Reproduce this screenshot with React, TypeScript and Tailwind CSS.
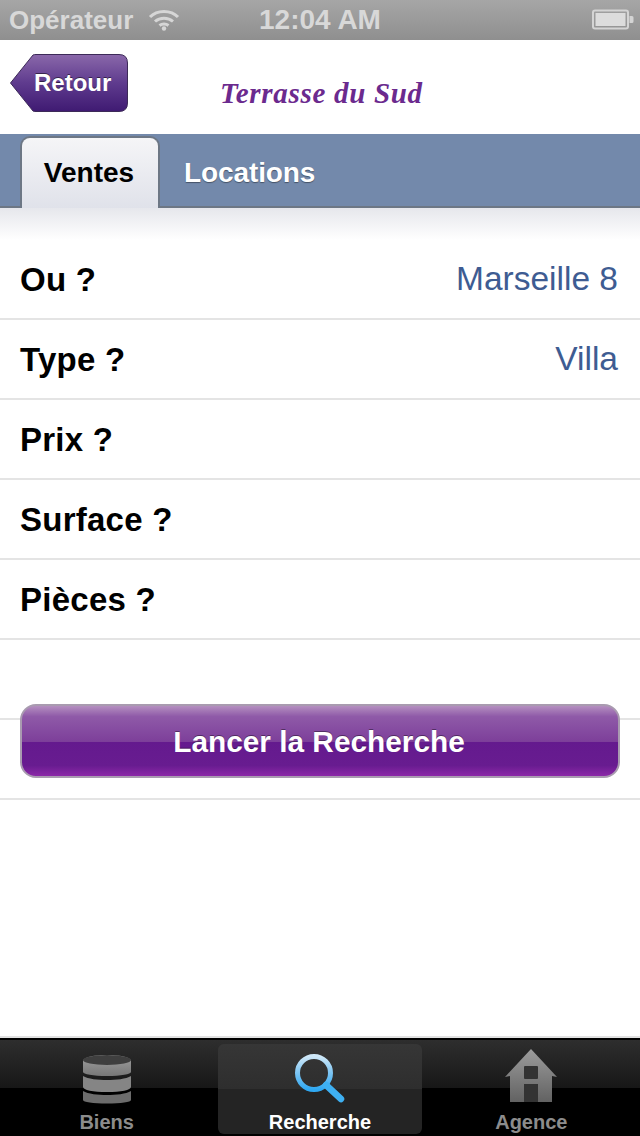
const rows = [
  { label: "Ou ?", value: "Marseille 8" },
  { label: "Type ?", value: "Villa" },
  { label: "Prix ?" },
  { label: "Surface ?" },
  { label: "Pièces ?" },
];

function Wifi() {
  return (
    <svg width="32" height="22" viewBox="0 0 32 22" fill="none" stroke="#d6d6d6" strokeWidth="3">
      <path d="M2 8 C9 0.5 23 0.5 30 8" />
      <path d="M7 12.5 C12 8 20 8 25 12.5" />
      <path d="M11.5 16.5 C14 14.5 18 14.5 20.5 16.5" />
      <circle cx="16" cy="19.5" r="2.2" fill="#d6d6d6" stroke="none" />
    </svg>
  );
}

function Battery() {
  return (
    <svg width="42" height="22" viewBox="0 0 42 22">
      <rect x="1" y="1.5" width="35" height="18" rx="2" fill="none" stroke="#d4d4d4" strokeWidth="2" />
      <rect x="3.500" y="4" width="30" height="13" fill="#dcdcdc" />
      <path d="M37.500 7h2.500a1.500 1.500 0 0 1 1.500 1.500v4a1.500 1.500 0 0 1-1.500 1.500h-2.500z" fill="#d4d4d4" />
    </svg>
  );
}

function RetourButton() {
  return (
    <div className="relative h-[58px] w-[118px]">
      <svg className="absolute inset-0" width="118" height="58" viewBox="0 0 118 58">
        <defs>
          <linearGradient id="retour" x1="0" y1="0" x2="0" y2="1">
            <stop offset="0" stopColor="#8a68aa" />
            <stop offset="0.5" stopColor="#5f3b8e" />
            <stop offset="1" stopColor="#3f1a72" />
          </linearGradient>
        </defs>
        <path
          d="M0.5 29 L23 1 Q24 0.5 26 0.5 H109 Q117.5 0.5 117.5 9 V49 Q117.5 57.5 109 57.5 H26 Q24 57.5 23 57 Z"
          fill="url(#retour)"
          stroke="#3d2a58"
          strokeWidth="1"
        />
      </svg>
      <span className="absolute left-[24px] top-[13px] text-[24px] leading-[32px] font-bold text-white [text-shadow:0_-1px_0_rgba(0,0,0,0.5)]">
        Retour
      </span>
    </div>
  );
}

function Biens() {
  return (
    <svg width="50" height="50" viewBox="0 0 50 50">
      <defs>
        <linearGradient id="biens" x1="0" y1="0" x2="0" y2="1">
          <stop offset="0" stopColor="#a0a0a0" />
          <stop offset="1" stopColor="#777" />
        </linearGradient>
      </defs>
      <path d="M1 7C1 3 13 1 25 1s24 2 24 6v11c0 2-10 4-24 4S1 20 1 18z" fill="url(#biens)" />
      <ellipse cx="25" cy="6" rx="24" ry="5" fill="#3f3f3f" />
      <path d="M1 22c5 3 15 4 24 4s19-1 24-4v11c0 3-10 5-24 5S1 36 1 33z" fill="#858585" />
      <path d="M1 37c5 3 15 4 24 4s19-1 24-4v9c0 2-10 3.500-24 3.500S1 48 1 46z" fill="#6c6c6c" />
    </svg>
  );
}

function Loupe() {
  return (
    <svg width="52" height="50" viewBox="0 0 52 50" fill="none">
      <defs>
        <linearGradient id="loupe" x1="0" y1="0" x2="0" y2="1">
          <stop offset="0" stopColor="#cfe8f8" />
          <stop offset="0.5" stopColor="#7cc4f2" />
          <stop offset="1" stopColor="#2fa8f2" />
        </linearGradient>
      </defs>
      <circle cx="20" cy="20" r="16.500" stroke="url(#loupe)" strokeWidth="5" />
      <path d="M32 32 L47 46" stroke="#3eb0f2" strokeWidth="6.500" strokeLinecap="round" />
    </svg>
  );
}

function Agence() {
  return (
    <svg width="52" height="54" viewBox="0 0 52 54">
      <defs>
        <linearGradient id="agence" x1="0" y1="0" x2="0" y2="1">
          <stop offset="0" stopColor="#9c9c9c" />
          <stop offset="1" stopColor="#626262" />
        </linearGradient>
      </defs>
      <path d="M26 0 L52 28 L47 27 V53 H5 V27 L0 28 Z" fill="url(#agence)" />
      <rect x="19" y="17" width="14" height="13" rx="1" fill="#333" />
      <rect x="19" y="35" width="14" height="18" fill="#333" />
    </svg>
  );
}

export default function App() {
  return (
    <div className="flex h-[1136px] w-[640px] flex-col overflow-hidden bg-white font-['Liberation_Sans',Arial,sans-serif]">
      {/* status bar */}
      <div className="relative flex h-10 shrink-0 items-center justify-between bg-gradient-to-b from-[#a6a6a6] to-[#8f8f8f] pr-[6px] pl-[9px] text-[26px] font-bold text-[#d8d8d8]">
        <div className="flex items-center gap-[15px]">
          <span>Opérateur</span>
          <Wifi />
        </div>
        <div className="absolute left-0 right-0 text-center text-[28px] whitespace-nowrap">12:04 AM</div>
        <Battery />
      </div>

      {/* header */}
      <div className="flex h-[94px] shrink-0 items-center pb-[8px] pl-[10px]">
        <RetourButton />
        <span className="ml-[92px] mt-[20px] font-['Liberation_Serif',serif] text-[29px] leading-none font-bold tracking-[0.7px] whitespace-nowrap text-[#6b2a8e] italic">
          Terrasse du Sud
        </span>
      </div>

      {/* tabs */}
      <div className="flex h-[74px] shrink-0 items-end border-b-2 border-[#6d7785] bg-[#7389ab] pl-[20px]">
        <div className="-mb-[2px] flex h-[72px] w-[140px] items-center justify-center rounded-t-[10px] border-x-2 border-t-2 border-b-0 border-[#6d7785] bg-gradient-to-b from-[#f5f5f7] to-[#e0e2ea] pr-[2px] text-[28px] font-bold text-black">
          Ventes
        </div>
        <div className="flex h-[72px] items-center pt-[5px] pl-[24px] text-[28px] tracking-[-0.1px] font-bold text-white [text-shadow:0_1px_1px_rgba(0,0,0,0.4)]">
          Locations
        </div>
      </div>
      <div className="h-[32px] shrink-0 bg-gradient-to-b from-[#e6e7ec] to-white" />

      {/* rows */}
      <div className="relative flex-1">
        {rows.map((r) => (
          <div
            key={r.label}
            className="flex h-[80px] items-center justify-between border-b-2 border-[#e4e4e4] pt-[1px] pr-[22px] pl-[20px]"
          >
            <span className="text-[33px] font-bold tracking-[0.25px] text-black">{r.label}</span>
            {r.value && <span className="text-[33.5px] text-[#3e5c92]">{r.value}</span>}
          </div>
        ))}
        <div className="h-[80px] border-b-2 border-[#e4e4e4]" />
        <div className="h-[80px] border-b-2 border-[#e4e4e4]" />
        <div className="absolute top-[464px] left-[20px] flex h-[74px] w-[600px] items-center justify-center rounded-[16px] border-2 border-[#a99bb0] bg-[linear-gradient(to_bottom,#b48fc0_0%,#8f5aa8_15%,#7d3f9a_51%,#641a8e_51%,#681c90_85%,#8c28a8_100%)] pt-[2px] pr-[2px] text-[29.8px] font-bold text-white [text-shadow:0_-1px_0_rgba(0,0,0,0.4)]">
          Lancer la Recherche
        </div>
      </div>

      {/* tab bar */}
      <div className="h-[2px] shrink-0 bg-[#e2e2e2]" />
      <div className="grid h-[98px] shrink-0 grid-cols-3 border-t-2 border-black bg-[linear-gradient(to_bottom,#2e2e2e_0%,#171717_50%,#000_50%,#000_100%)]">
        <div className="flex flex-col items-center pt-[14px]">
          <Biens />
          <span className="mt-[6px] text-[20px] leading-[24px] font-bold text-[#8c8c8c]">Biens</span>
        </div>
        <div className="mx-[5px] mt-[4px] mb-[5px] flex flex-col items-center rounded-[6px] bg-[linear-gradient(to_bottom,#363636_0%,#2e2e2e_49.5%,#242424_49.5%,#242424_100%)] pt-[9px]">
          <Loupe />
          <span className="mt-[7px] text-[20px] leading-[24px] font-bold text-white">Recherche</span>
        </div>
        <div className="flex flex-col items-center pt-[9px] pr-[4px]">
          <Agence />
          <span className="mt-[7px] text-[20px] leading-[24px] font-bold text-[#8c8c8c]">Agence</span>
        </div>
      </div>
    </div>
  );
}
